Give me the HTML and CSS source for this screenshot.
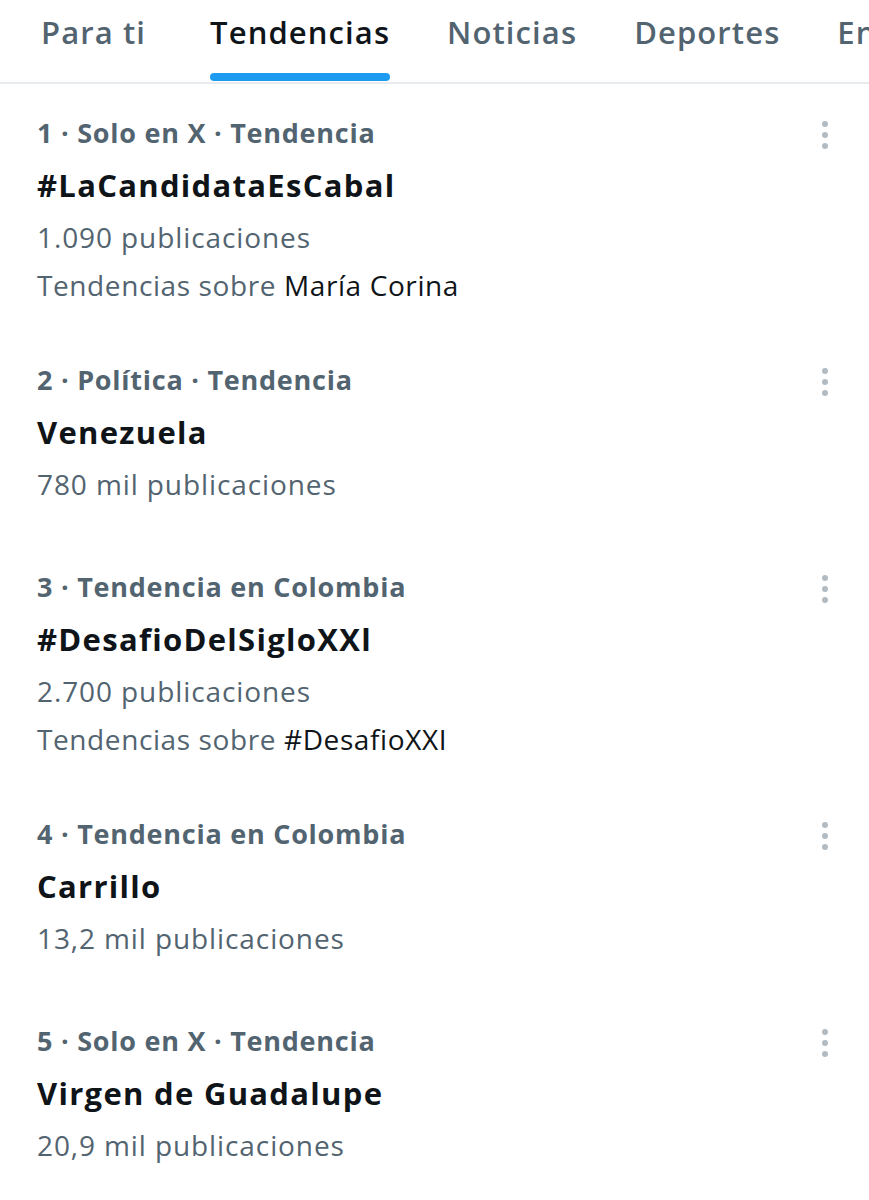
FILE: index.html
```html
<!DOCTYPE html>
<html lang="es">
<head>
<meta charset="utf-8">
<link rel="stylesheet" href="styles.css">
</head>
<body>
<div class="page">
  <nav class="tabs">
    <div class="tab first">Para ti</div>
    <div class="tab active">Tendencias</div>
    <div class="tab">Noticias</div>
    <div class="tab">Deportes</div>
    <div class="tab">Entretenimiento</div>
  </nav>
  <ul class="trends">
    <li class="trend">
      <div class="trend-body">
        <div class="meta">1 · Solo en X · Tendencia</div>
        <div class="title">#LaCandidataEsCabal</div>
        <div class="count">1.090 publicaciones</div>
        <div class="about">Tendencias sobre <span class="about-name">María Corina</span></div>
      </div>
      <div class="more"><span></span><span></span><span></span></div>
    </li>
    <li class="trend">
      <div class="trend-body">
        <div class="meta">2 · Política · Tendencia</div>
        <div class="title">Venezuela</div>
        <div class="count">780 mil publicaciones</div>
      </div>
      <div class="more"><span></span><span></span><span></span></div>
    </li>
    <li class="trend">
      <div class="trend-body">
        <div class="meta">3 · Tendencia en Colombia</div>
        <div class="title">#DesafioDelSigloXXl</div>
        <div class="count">2.700 publicaciones</div>
        <div class="about">Tendencias sobre <span class="about-name">#DesafioXXI</span></div>
      </div>
      <div class="more"><span></span><span></span><span></span></div>
    </li>
    <li class="trend">
      <div class="trend-body">
        <div class="meta">4 · Tendencia en Colombia</div>
        <div class="title">Carrillo</div>
        <div class="count">13,2 mil publicaciones</div>
      </div>
      <div class="more"><span></span><span></span><span></span></div>
    </li>
    <li class="trend">
      <div class="trend-body">
        <div class="meta">5 · Solo en X · Tendencia</div>
        <div class="title">Virgen de Guadalupe</div>
        <div class="count">20,9 mil publicaciones</div>
      </div>
      <div class="more"><span></span><span></span><span></span></div>
    </li>
  </ul>
</div>
</body>
</html>
```
FILE: styles.css
```css
* { box-sizing: border-box; }
html, body { margin: 0; padding: 0; background: #ffffff; }
body {
  font-family: "Open Sans", "Noto Sans", sans-serif;
  color: #0f1419;
  width: 869px;
  height: 1200px;
  overflow: hidden;
}
.page { width: 869px; }
.tabs {
  display: flex;
  height: 84px;
  border-bottom: 2px solid #e9ecee;
  padding-left: 41px;
  white-space: nowrap;
  overflow: hidden;
}
.tab {
  position: relative;
  font-size: 31px;
  font-weight: 600;
  letter-spacing: 1.1px;
  color: #536471;
  line-height: 64px;
  margin-right: 57px;
  flex: none;
}
.tab.first { margin-right: 64px; }
.tab.active { color: #0f1419; }
.tab.active::after {
  content: "";
  position: absolute;
  left: 0;
  right: 0;
  top: 73px;
  height: 8px;
  border-radius: 4px;
  background: #1d9bf0;
}
.trends {
  list-style: none;
  margin: 0;
  padding: 1px 0 0;
}
.trend {
  display: flex;
  justify-content: space-between;
  padding: 22px 0 29px 37px;
}
.trend-body { display: flex; flex-direction: column; }
.meta {
  font-size: 27px;
  font-weight: 700;
  letter-spacing: 0.75px;
  color: #536471;
  line-height: 52px;
}
.title {
  font-size: 31px;
  font-weight: 700;
  letter-spacing: 1.3px;
  color: #0f1419;
  line-height: 52px;
}
.count {
  font-size: 28px;
  letter-spacing: 0.9px;
  color: #536471;
  line-height: 52px;
}
.about {
  font-size: 28px;
  letter-spacing: 0.6px;
  color: #536471;
  line-height: 36px;
  margin-top: 4px;
}
.about-name { color: #0f1419; }
.more {
  display: flex;
  flex-direction: column;
  gap: 5px;
  width: 5px;
  margin: 14px 42px 0 0;
}
.more span {
  width: 6px;
  height: 6px;
  border-radius: 50%;
  background: #b3bbc2;
}
```
